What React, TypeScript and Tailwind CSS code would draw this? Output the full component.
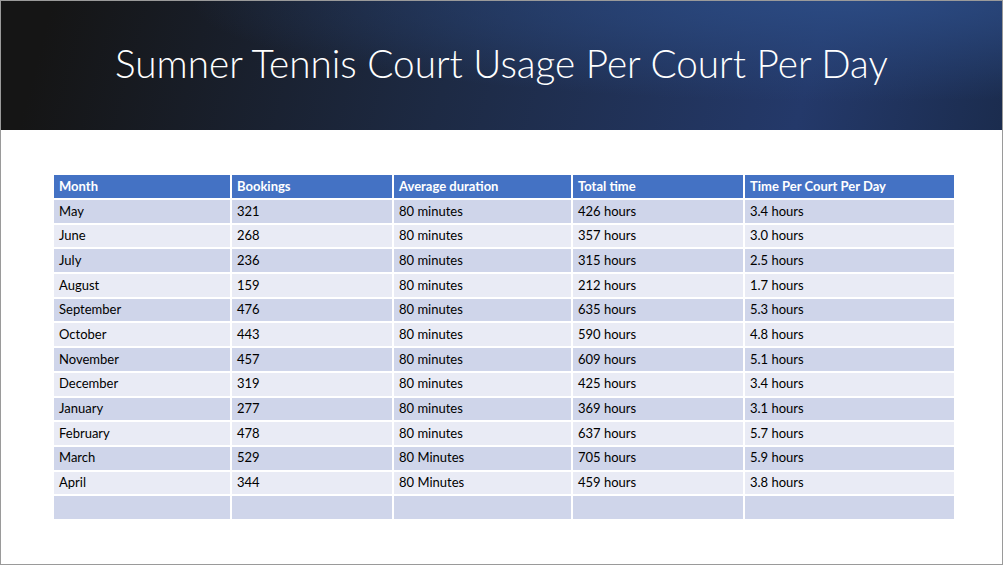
import React from "react";

const rows = [
  ["May", "321", "80 minutes", "426 hours", "3.4 hours"],
  ["June", "268", "80 minutes", "357 hours", "3.0 hours"],
  ["July", "236", "80 minutes", "315 hours", "2.5 hours"],
  ["August", "159", "80 minutes", "212 hours", "1.7 hours"],
  ["September", "476", "80 minutes", "635 hours", "5.3 hours"],
  ["October", "443", "80 minutes", "590 hours", "4.8 hours"],
  ["November", "457", "80 minutes", "609 hours", "5.1 hours"],
  ["December", "319", "80 minutes", "425 hours", "3.4 hours"],
  ["January", "277", "80 minutes", "369 hours", "3.1 hours"],
  ["February", "478", "80 minutes", "637 hours", "5.7 hours"],
  ["March", "529", "80 Minutes", "705 hours", "5.9 hours"],
  ["April", "344", "80 Minutes", "459 hours", "3.8 hours"],
  ["", "", "", "", ""],
];

const headers = ["Month", "Bookings", "Average duration", "Total time", "Time Per Court Per Day"];

const App = () => {
  return (
    <div className="w-[1003px] h-[565px] border border-[#9a9a9a] bg-white overflow-hidden font-['Lato',sans-serif]">
      <div className="h-[129px] flex items-center justify-center bg-[radial-gradient(ellipse_at_85%_0%,#2b4a82_0%,rgba(43,74,130,0)_55%),linear-gradient(105deg,#151515_5%,#1d2a44_45%,#24396a_80%,#1b2c4e_100%)]">
        <h1 className="text-white text-[38.7px] font-light -mt-[4px]">
          Sumner Tennis Court Usage Per Court Per Day
        </h1>
      </div>
      <div className="mt-[45px] ml-[53px] w-[900px] grid grid-cols-[176px_160px_177px_170px_209px] gap-[2px] text-[13px] text-black">
        {headers.map((h) => (
          <div key={h} className="h-[23px] bg-[#4472c4] text-white font-bold pl-[5px] flex items-center">
            {h}
          </div>
        ))}
        {rows.map((r, i) =>
          r.map((c, j) => (
            <div
              key={`${i}-${j}`}
              className={`h-[22.7px] pl-[5px] flex items-center ${i % 2 === 0 ? "bg-[#cfd5ea]" : "bg-[#e9ebf5]"}`}
            >
              {c}
            </div>
          ))
        )}
      </div>
    </div>
  );
};

export default App;
